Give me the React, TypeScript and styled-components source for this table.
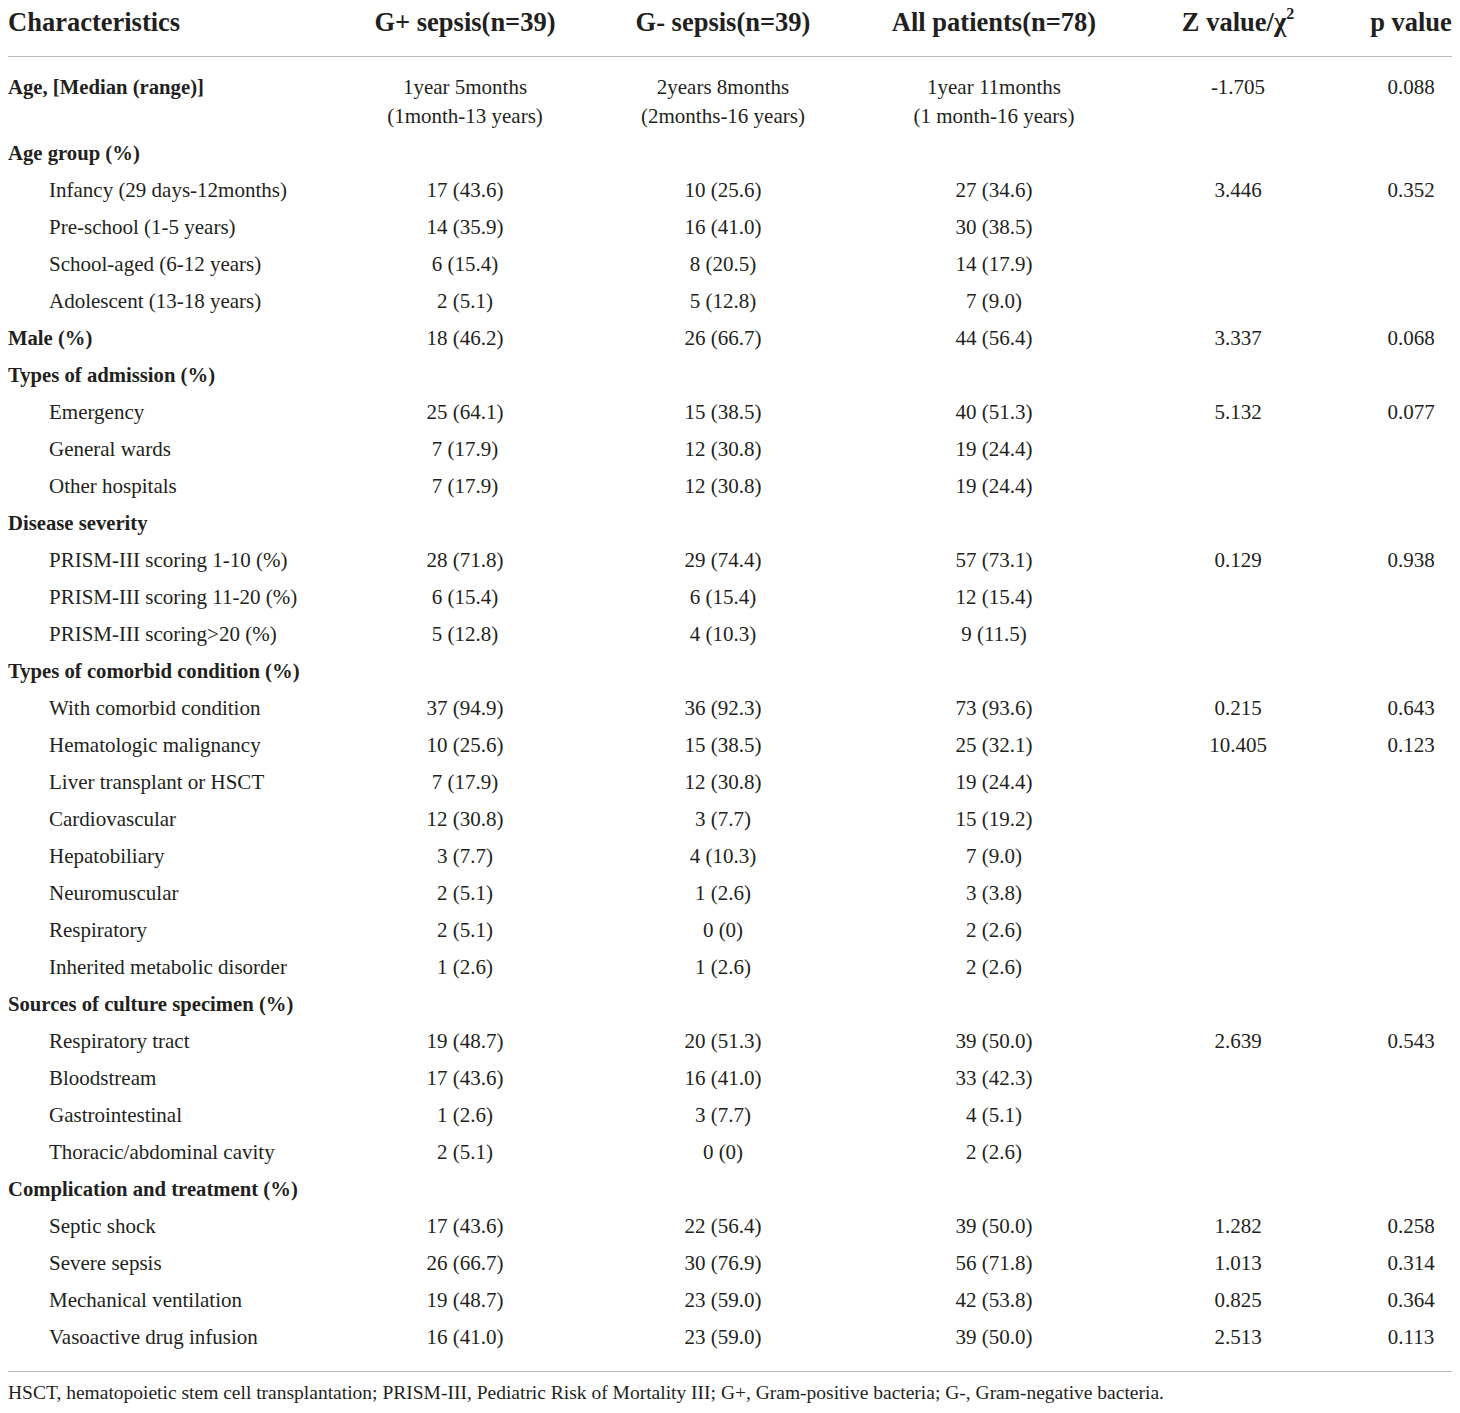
import styled, { createGlobalStyle } from "styled-components";

const GlobalStyle = createGlobalStyle`
  html, body {
    margin: 0;
    padding: 0;
    background: #fff;
  }
  body {
    font-family: "Liberation Serif", "Times New Roman", serif;
    color: #231f20;
  }
`;

type Row = {
  label: string;
  group?: boolean;
  values?: [string, string, string, string, string];
};

const rows: Row[] = [
  { label: "Age group (%)", group: true },
  { label: "Infancy (29 days-12months)", values: ["17 (43.6)", "10 (25.6)", "27 (34.6)", "3.446", "0.352"] },
  { label: "Pre-school (1-5 years)", values: ["14 (35.9)", "16 (41.0)", "30 (38.5)", "", ""] },
  { label: "School-aged (6-12 years)", values: ["6 (15.4)", "8 (20.5)", "14 (17.9)", "", ""] },
  { label: "Adolescent (13-18 years)", values: ["2 (5.1)", "5 (12.8)", "7 (9.0)", "", ""] },
  { label: "Male (%)", group: true, values: ["18 (46.2)", "26 (66.7)", "44 (56.4)", "3.337", "0.068"] },
  { label: "Types of admission (%)", group: true },
  { label: "Emergency", values: ["25 (64.1)", "15 (38.5)", "40 (51.3)", "5.132", "0.077"] },
  { label: "General wards", values: ["7 (17.9)", "12 (30.8)", "19 (24.4)", "", ""] },
  { label: "Other hospitals", values: ["7 (17.9)", "12 (30.8)", "19 (24.4)", "", ""] },
  { label: "Disease severity", group: true },
  { label: "PRISM-III scoring 1-10 (%)", values: ["28 (71.8)", "29 (74.4)", "57 (73.1)", "0.129", "0.938"] },
  { label: "PRISM-III scoring 11-20 (%)", values: ["6 (15.4)", "6 (15.4)", "12 (15.4)", "", ""] },
  { label: "PRISM-III scoring>20 (%)", values: ["5 (12.8)", "4 (10.3)", "9 (11.5)", "", ""] },
  { label: "Types of comorbid condition (%)", group: true },
  { label: "With comorbid condition", values: ["37 (94.9)", "36 (92.3)", "73 (93.6)", "0.215", "0.643"] },
  { label: "Hematologic malignancy", values: ["10 (25.6)", "15 (38.5)", "25 (32.1)", "10.405", "0.123"] },
  { label: "Liver transplant or HSCT", values: ["7 (17.9)", "12 (30.8)", "19 (24.4)", "", ""] },
  { label: "Cardiovascular", values: ["12 (30.8)", "3 (7.7)", "15 (19.2)", "", ""] },
  { label: "Hepatobiliary", values: ["3 (7.7)", "4 (10.3)", "7 (9.0)", "", ""] },
  { label: "Neuromuscular", values: ["2 (5.1)", "1 (2.6)", "3 (3.8)", "", ""] },
  { label: "Respiratory", values: ["2 (5.1)", "0 (0)", "2 (2.6)", "", ""] },
  { label: "Inherited metabolic disorder", values: ["1 (2.6)", "1 (2.6)", "2 (2.6)", "", ""] },
  { label: "Sources of culture specimen (%)", group: true },
  { label: "Respiratory tract", values: ["19 (48.7)", "20 (51.3)", "39 (50.0)", "2.639", "0.543"] },
  { label: "Bloodstream", values: ["17 (43.6)", "16 (41.0)", "33 (42.3)", "", ""] },
  { label: "Gastrointestinal", values: ["1 (2.6)", "3 (7.7)", "4 (5.1)", "", ""] },
  { label: "Thoracic/abdominal cavity", values: ["2 (5.1)", "0 (0)", "2 (2.6)", "", ""] },
  { label: "Complication and treatment (%)", group: true },
  { label: "Septic shock", values: ["17 (43.6)", "22 (56.4)", "39 (50.0)", "1.282", "0.258"] },
  { label: "Severe sepsis", values: ["26 (66.7)", "30 (76.9)", "56 (71.8)", "1.013", "0.314"] },
  { label: "Mechanical ventilation", values: ["19 (48.7)", "23 (59.0)", "42 (53.8)", "0.825", "0.364"] },
  { label: "Vasoactive drug infusion", values: ["16 (41.0)", "23 (59.0)", "39 (50.0)", "2.513", "0.113"] },
];

const colWidths = [358, 198, 318, 224, 264, 82];

const Page = styled.div`
  padding: 0 8px;
  width: 1444px;
`;

const Table = styled.table`
  width: 1444px;
  table-layout: fixed;
  border-collapse: collapse;
  border-bottom: 1px solid #b9b9b9;
`;

const Head = styled.th<{ $left?: boolean }>`
  padding: 7px 0 19px;
  line-height: 30px;
  font-size: 26.5px;
  font-weight: 700;
  text-align: ${(p) => (p.$left ? "left" : "center")};
  white-space: nowrap;
  border-bottom: 1px solid #b9b9b9;

  sup {
    font-size: 16px;
    line-height: 0;
    vertical-align: 12px;
  }
`;

const Cell = styled.td<{ $label?: boolean; $bold?: boolean; $indent?: boolean; $tall?: boolean; $last?: boolean }>`
  padding: ${(p) => (p.$tall ? "16px" : "4px")} 0 ${(p) => (p.$last ? "19px" : "4px")};
  padding-left: ${(p) => (p.$indent ? "41px" : "0")};
  line-height: 29px;
  font-size: ${(p) => (p.$bold ? "20.7px" : "21px")};
  font-weight: ${(p) => (p.$bold ? 700 : 400)};
  text-align: ${(p) => (p.$label ? "left" : "center")};
  vertical-align: top;
  white-space: nowrap;
`;

const Footnote = styled.p`
  margin: 0;
  padding-top: 8px;
  line-height: 26px;
  font-size: 19.5px;
  white-space: nowrap;
`;

export default function App() {
  return (
    <>
      <GlobalStyle />
      <Page>
        <Table>
          <colgroup>
            {colWidths.map((w, i) => (
              <col key={i} style={{ width: w }} />
            ))}
          </colgroup>
          <thead>
            <tr>
              <Head $left>Characteristics</Head>
              <Head>G+ sepsis(n=39)</Head>
              <Head>G- sepsis(n=39)</Head>
              <Head>All patients(n=78)</Head>
              <Head>
                Z value/χ<sup>2</sup>
              </Head>
              <Head>p value</Head>
            </tr>
          </thead>
          <tbody>
            <tr>
              <Cell $label $bold $tall>
                Age, [Median (range)]
              </Cell>
              <Cell $tall>
                1year 5months
                <br />
                (1month-13 years)
              </Cell>
              <Cell $tall>
                2years 8months
                <br />
                (2months-16 years)
              </Cell>
              <Cell $tall>
                1year 11months
                <br />
                (1 month-16 years)
              </Cell>
              <Cell $tall>-1.705</Cell>
              <Cell $tall>0.088</Cell>
            </tr>
            {rows.map((r, i) => {
              const last = i === rows.length - 1;
              return (
                <tr key={r.label}>
                  <Cell $label $bold={r.group} $indent={!r.group} $last={last}>
                    {r.label}
                  </Cell>
                  {(r.values ?? ["", "", "", "", ""]).map((v, j) => (
                    <Cell key={j} $last={last}>
                      {v}
                    </Cell>
                  ))}
                </tr>
              );
            })}
          </tbody>
        </Table>
        <Footnote>
          HSCT, hematopoietic stem cell transplantation; PRISM-III, Pediatric Risk of Mortality III; G+,
          Gram-positive bacteria; G-, Gram-negative bacteria.
        </Footnote>
      </Page>
    </>
  );
}
